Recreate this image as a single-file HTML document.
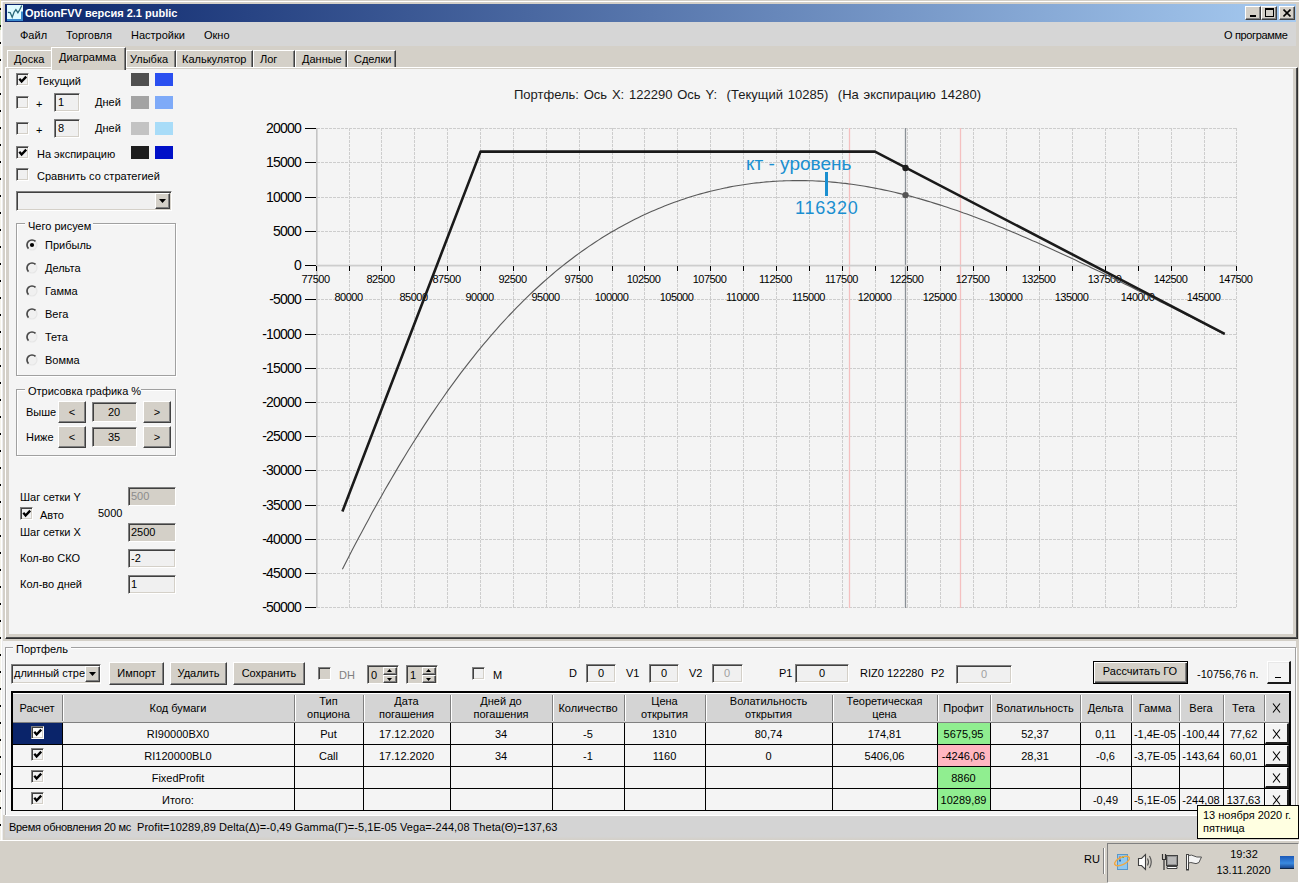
<!DOCTYPE html>
<html><head><meta charset="utf-8"><style>
html,body{margin:0;padding:0;width:1299px;height:883px;overflow:hidden;background:#d4d0c8}
body>div,body>svg{position:absolute;box-sizing:content-box}
.t{position:absolute;white-space:pre;font-family:'Liberation Sans', sans-serif}
</style></head><body>
<div style="left:0px;top:0px;width:1299px;height:883px;background:#d4d0c8"></div><div style="left:0px;top:0px;width:1px;height:840px;background:#f4f2ea"></div><div style="left:0px;top:0px;width:1px;height:12px;background:#e8e0b8"></div><div style="left:0px;top:12px;width:1px;height:18px;background:#a8c890"></div><div style="left:0px;top:8px;width:1px;height:2px;background:#000"></div><div style="left:0px;top:25px;width:1px;height:2px;background:#000"></div><div style="left:0px;top:42px;width:1px;height:2px;background:#000"></div><div style="left:0px;top:59px;width:1px;height:2px;background:#000"></div><div style="left:0px;top:76px;width:1px;height:2px;background:#000"></div><div style="left:0px;top:93px;width:1px;height:2px;background:#000"></div><div style="left:0px;top:110px;width:1px;height:2px;background:#000"></div><div style="left:0px;top:127px;width:1px;height:2px;background:#000"></div><div style="left:0px;top:144px;width:1px;height:2px;background:#000"></div><div style="left:0px;top:161px;width:1px;height:2px;background:#000"></div><div style="left:0px;top:178px;width:1px;height:2px;background:#000"></div><div style="left:0px;top:195px;width:1px;height:2px;background:#000"></div><div style="left:0px;top:212px;width:1px;height:2px;background:#000"></div><div style="left:0px;top:229px;width:1px;height:2px;background:#000"></div><div style="left:0px;top:246px;width:1px;height:2px;background:#000"></div><div style="left:0px;top:263px;width:1px;height:2px;background:#000"></div><div style="left:0px;top:280px;width:1px;height:2px;background:#000"></div><div style="left:0px;top:297px;width:1px;height:2px;background:#000"></div><div style="left:0px;top:314px;width:1px;height:2px;background:#000"></div><div style="left:0px;top:331px;width:1px;height:2px;background:#000"></div><div style="left:0px;top:348px;width:1px;height:2px;background:#000"></div><div style="left:0px;top:365px;width:1px;height:2px;background:#000"></div><div style="left:0px;top:382px;width:1px;height:2px;background:#000"></div><div style="left:0px;top:399px;width:1px;height:2px;background:#000"></div><div style="left:0px;top:416px;width:1px;height:2px;background:#000"></div><div style="left:0px;top:433px;width:1px;height:2px;background:#000"></div><div style="left:0px;top:450px;width:1px;height:2px;background:#000"></div><div style="left:0px;top:467px;width:1px;height:2px;background:#000"></div><div style="left:0px;top:484px;width:1px;height:2px;background:#000"></div><div style="left:0px;top:501px;width:1px;height:2px;background:#000"></div><div style="left:0px;top:518px;width:1px;height:2px;background:#000"></div><div style="left:0px;top:535px;width:1px;height:2px;background:#000"></div><div style="left:0px;top:552px;width:1px;height:2px;background:#000"></div><div style="left:0px;top:569px;width:1px;height:2px;background:#000"></div><div style="left:0px;top:586px;width:1px;height:2px;background:#000"></div><div style="left:0px;top:603px;width:1px;height:2px;background:#000"></div><div style="left:0px;top:620px;width:1px;height:2px;background:#000"></div><div style="left:0px;top:637px;width:1px;height:2px;background:#000"></div><div style="left:0px;top:654px;width:1px;height:2px;background:#000"></div><div style="left:0px;top:671px;width:1px;height:2px;background:#000"></div><div style="left:0px;top:688px;width:1px;height:2px;background:#000"></div><div style="left:0px;top:705px;width:1px;height:2px;background:#000"></div><div style="left:0px;top:722px;width:1px;height:2px;background:#000"></div><div style="left:0px;top:739px;width:1px;height:2px;background:#000"></div><div style="left:0px;top:756px;width:1px;height:2px;background:#000"></div><div style="left:0px;top:773px;width:1px;height:2px;background:#000"></div><div style="left:0px;top:790px;width:1px;height:2px;background:#000"></div><div style="left:0px;top:807px;width:1px;height:2px;background:#000"></div><div style="left:0px;top:824px;width:1px;height:2px;background:#000"></div><div style="left:1px;top:1px;width:1298px;height:1px;background:#fff"></div><div style="left:1px;top:1px;width:1px;height:839px;background:#fff"></div><div style="left:2px;top:2px;width:1px;height:838px;background:#ececec"></div><div style="left:5px;top:4px;width:1291px;height:18px;background:linear-gradient(to right,#0a246a,#a6caf0)"></div><div class="t" style="left:25px;top:8px;font-size:11px;line-height:11px;color:#fff;font-weight:700;">OptionFVV версия 2.1 public</div><svg style="left:7px;top:5px;position:absolute" width="16" height="16" viewBox="0 0 16 16"><rect x="0" y="0" width="16" height="16" fill="#3a88cc"/><rect x="0" y="0" width="16" height="6.5" fill="#e8fcff"/><rect x="0" y="0" width="14" height="14" fill="#e0fbff"/><path d="M0.9 7.3 L3.2 7.5 L5.2 12.3 L7.1 7.1 L8.9 4.6 L10.9 7.7 L12.7 4.8 L14.8 0.5" stroke="#2a6878" stroke-width="1.3" fill="none"/></svg><div style="left:1245px;top:6px;width:14px;height:12px;background:#d4d0c8;border-style:solid;border-width:1px;border-color:#fff #404040 #404040 #fff;box-shadow:inset -1px -1px 0 #808080, inset 1px 1px 0 #d4d0c8"></div><div style="left:1261px;top:6px;width:14px;height:12px;background:#d4d0c8;border-style:solid;border-width:1px;border-color:#fff #404040 #404040 #fff;box-shadow:inset -1px -1px 0 #808080, inset 1px 1px 0 #d4d0c8"></div><div style="left:1279px;top:6px;width:14px;height:12px;background:#d4d0c8;border-style:solid;border-width:1px;border-color:#fff #404040 #404040 #fff;box-shadow:inset -1px -1px 0 #808080, inset 1px 1px 0 #d4d0c8"></div><div style="left:1250px;top:15px;width:6px;height:2px;background:#000"></div><div style="left:1265px;top:8px;width:7px;height:6px;border:1px solid #000;border-top-width:2px"></div><svg style="position:absolute;left:1283px;top:9px" width="8" height="8" viewBox="0 0 8 8"><path d="M0.5 0.5 L7.5 7.5 M7.5 0.5 L0.5 7.5" stroke="#000" stroke-width="1.6"/></svg><div style="left:3px;top:22px;width:1293px;height:24px;background:#d6d6d6"></div><div class="t" style="left:20px;top:30px;font-size:11px;line-height:11px;color:#000;font-weight:400;">Файл</div><div class="t" style="left:66px;top:30px;font-size:11px;line-height:11px;color:#000;font-weight:400;">Торговля</div><div class="t" style="left:131px;top:30px;font-size:11px;line-height:11px;color:#000;font-weight:400;">Настройки</div><div class="t" style="left:204px;top:30px;font-size:11px;line-height:11px;color:#000;font-weight:400;">Окно</div><div class="t" style="left:1224px;top:30px;font-size:11px;line-height:11px;color:#000;font-weight:400;letter-spacing:-0.35px">О программе</div><div style="left:7px;top:50px;width:44px;height:17px;background:#d4d0c8;border-left:1px solid #fff;border-top:1px solid #fff"></div><div class="t" style="left:14px;top:54px;font-size:11px;line-height:11px;color:#000;font-weight:400;">Доска</div><div style="left:126px;top:50px;width:48px;height:17px;background:#d4d0c8;border-left:1px solid #fff;border-top:1px solid #fff;border-right:1px solid #404040;box-shadow:inset -1px 0 0 #808080"></div><div class="t" style="left:130px;top:54px;font-size:11px;line-height:11px;color:#000;font-weight:400;">Улыбка</div><div style="left:176px;top:50px;width:75px;height:17px;background:#d4d0c8;border-left:1px solid #fff;border-top:1px solid #fff;border-right:1px solid #404040;box-shadow:inset -1px 0 0 #808080"></div><div class="t" style="left:182px;top:54px;font-size:11px;line-height:11px;color:#000;font-weight:400;">Калькулятор</div><div style="left:253px;top:50px;width:40px;height:17px;background:#d4d0c8;border-left:1px solid #fff;border-top:1px solid #fff;border-right:1px solid #404040;box-shadow:inset -1px 0 0 #808080"></div><div class="t" style="left:260px;top:54px;font-size:11px;line-height:11px;color:#000;font-weight:400;">Лог</div><div style="left:295px;top:50px;width:50px;height:17px;background:#d4d0c8;border-left:1px solid #fff;border-top:1px solid #fff;border-right:1px solid #404040;box-shadow:inset -1px 0 0 #808080"></div><div class="t" style="left:302px;top:54px;font-size:11px;line-height:11px;color:#000;font-weight:400;">Данные</div><div style="left:347px;top:50px;width:47px;height:17px;background:#d4d0c8;border-left:1px solid #fff;border-top:1px solid #fff;border-right:1px solid #404040;box-shadow:inset -1px 0 0 #808080"></div><div class="t" style="left:354px;top:54px;font-size:11px;line-height:11px;color:#000;font-weight:400;">Сделки</div><div style="left:5px;top:67px;width:1291px;height:570px;background:#d4d0c8;border-left:1px solid #fff;border-top:1px solid #fff;border-right:1px solid #303030;border-bottom:1px solid #303030;box-shadow:inset -1px -1px 0 #505050"></div><div style="left:9px;top:69px;width:1284px;height:565px;background:#f4f4f4"></div><div style="left:51px;top:47px;width:73px;height:22px;background:#d4d0c8;border-left:1px solid #fff;border-top:1px solid #fff;border-right:1px solid #404040;box-shadow:inset -1px 0 0 #808080"></div><div class="t" style="left:59px;top:52px;font-size:11px;line-height:11px;color:#000;font-weight:400;">Диаграмма</div><svg style="position:absolute;left:250px;top:70px" width="1030" height="560" viewBox="250 70 1030 560"><line x1="349.5" y1="128" x2="349.5" y2="608" stroke="#cdcdcd" stroke-dasharray="3,1"/><line x1="381.5" y1="128" x2="381.5" y2="608" stroke="#cdcdcd" stroke-dasharray="3,1"/><line x1="414.5" y1="128" x2="414.5" y2="608" stroke="#cdcdcd" stroke-dasharray="3,1"/><line x1="447.5" y1="128" x2="447.5" y2="608" stroke="#cdcdcd" stroke-dasharray="3,1"/><line x1="480.5" y1="128" x2="480.5" y2="608" stroke="#cdcdcd" stroke-dasharray="3,1"/><line x1="513.5" y1="128" x2="513.5" y2="608" stroke="#cdcdcd" stroke-dasharray="3,1"/><line x1="546.5" y1="128" x2="546.5" y2="608" stroke="#cdcdcd" stroke-dasharray="3,1"/><line x1="579.5" y1="128" x2="579.5" y2="608" stroke="#cdcdcd" stroke-dasharray="3,1"/><line x1="612.5" y1="128" x2="612.5" y2="608" stroke="#cdcdcd" stroke-dasharray="3,1"/><line x1="644.5" y1="128" x2="644.5" y2="608" stroke="#cdcdcd" stroke-dasharray="3,1"/><line x1="677.5" y1="128" x2="677.5" y2="608" stroke="#cdcdcd" stroke-dasharray="3,1"/><line x1="710.5" y1="128" x2="710.5" y2="608" stroke="#cdcdcd" stroke-dasharray="3,1"/><line x1="743.5" y1="128" x2="743.5" y2="608" stroke="#cdcdcd" stroke-dasharray="3,1"/><line x1="776.5" y1="128" x2="776.5" y2="608" stroke="#cdcdcd" stroke-dasharray="3,1"/><line x1="809.5" y1="128" x2="809.5" y2="608" stroke="#cdcdcd" stroke-dasharray="3,1"/><line x1="842.5" y1="128" x2="842.5" y2="608" stroke="#cdcdcd" stroke-dasharray="3,1"/><line x1="875.5" y1="128" x2="875.5" y2="608" stroke="#cdcdcd" stroke-dasharray="3,1"/><line x1="907.5" y1="128" x2="907.5" y2="608" stroke="#cdcdcd" stroke-dasharray="3,1"/><line x1="940.5" y1="128" x2="940.5" y2="608" stroke="#cdcdcd" stroke-dasharray="3,1"/><line x1="973.5" y1="128" x2="973.5" y2="608" stroke="#cdcdcd" stroke-dasharray="3,1"/><line x1="1006.5" y1="128" x2="1006.5" y2="608" stroke="#cdcdcd" stroke-dasharray="3,1"/><line x1="1039.5" y1="128" x2="1039.5" y2="608" stroke="#cdcdcd" stroke-dasharray="3,1"/><line x1="1072.5" y1="128" x2="1072.5" y2="608" stroke="#cdcdcd" stroke-dasharray="3,1"/><line x1="1105.5" y1="128" x2="1105.5" y2="608" stroke="#cdcdcd" stroke-dasharray="3,1"/><line x1="1138.5" y1="128" x2="1138.5" y2="608" stroke="#cdcdcd" stroke-dasharray="3,1"/><line x1="1171.5" y1="128" x2="1171.5" y2="608" stroke="#cdcdcd" stroke-dasharray="3,1"/><line x1="1204.5" y1="128" x2="1204.5" y2="608" stroke="#cdcdcd" stroke-dasharray="3,1"/><line x1="1236.5" y1="128" x2="1236.5" y2="608" stroke="#cdcdcd" stroke-dasharray="3,1"/><line x1="317" y1="128.5" x2="1237" y2="128.5" stroke="#cdcdcd" stroke-dasharray="3,1"/><line x1="317" y1="162.5" x2="1237" y2="162.5" stroke="#cdcdcd" stroke-dasharray="3,1"/><line x1="317" y1="197.5" x2="1237" y2="197.5" stroke="#cdcdcd" stroke-dasharray="3,1"/><line x1="317" y1="231.5" x2="1237" y2="231.5" stroke="#cdcdcd" stroke-dasharray="3,1"/><line x1="317" y1="299.5" x2="1237" y2="299.5" stroke="#cdcdcd" stroke-dasharray="3,1"/><line x1="317" y1="334.5" x2="1237" y2="334.5" stroke="#cdcdcd" stroke-dasharray="3,1"/><line x1="317" y1="368.5" x2="1237" y2="368.5" stroke="#cdcdcd" stroke-dasharray="3,1"/><line x1="317" y1="402.5" x2="1237" y2="402.5" stroke="#cdcdcd" stroke-dasharray="3,1"/><line x1="317" y1="436.5" x2="1237" y2="436.5" stroke="#cdcdcd" stroke-dasharray="3,1"/><line x1="317" y1="470.5" x2="1237" y2="470.5" stroke="#cdcdcd" stroke-dasharray="3,1"/><line x1="317" y1="505.5" x2="1237" y2="505.5" stroke="#cdcdcd" stroke-dasharray="3,1"/><line x1="317" y1="539.5" x2="1237" y2="539.5" stroke="#cdcdcd" stroke-dasharray="3,1"/><line x1="317" y1="573.5" x2="1237" y2="573.5" stroke="#cdcdcd" stroke-dasharray="3,1"/><line x1="317" y1="607.5" x2="1237" y2="607.5" stroke="#cdcdcd" stroke-dasharray="3,1"/><line x1="849.5" y1="128" x2="849.5" y2="608" stroke="#f4c0c0" stroke-width="1.3"/><line x1="960.5" y1="128" x2="960.5" y2="608" stroke="#f4c0c0" stroke-width="1.3"/><line x1="905.5" y1="128" x2="905.5" y2="608" stroke="#8a9096" stroke-width="1.3"/><rect x="316" y="128" width="1.6" height="480" fill="#c4c4c4"/><rect x="316" y="264.7" width="921" height="1.8" fill="#cdcdcd"/><line x1="305" y1="128.5" x2="316" y2="128.5" stroke="#000" stroke-width="1"/><text font-family="Liberation Sans" xml:space="preserve" x="301" y="132.5" text-anchor="end" font-size="14" letter-spacing="-0.8" fill="#000">20000</text><line x1="305" y1="162.5" x2="316" y2="162.5" stroke="#000" stroke-width="1"/><text font-family="Liberation Sans" xml:space="preserve" x="301" y="166.5" text-anchor="end" font-size="14" letter-spacing="-0.8" fill="#000">15000</text><line x1="305" y1="197.5" x2="316" y2="197.5" stroke="#000" stroke-width="1"/><text font-family="Liberation Sans" xml:space="preserve" x="301" y="201.5" text-anchor="end" font-size="14" letter-spacing="-0.8" fill="#000">10000</text><line x1="305" y1="231.5" x2="316" y2="231.5" stroke="#000" stroke-width="1"/><text font-family="Liberation Sans" xml:space="preserve" x="301" y="235.5" text-anchor="end" font-size="14" letter-spacing="-0.8" fill="#000">5000</text><line x1="305" y1="265.5" x2="316" y2="265.5" stroke="#000" stroke-width="1"/><text font-family="Liberation Sans" xml:space="preserve" x="301" y="269.5" text-anchor="end" font-size="14" letter-spacing="-0.8" fill="#000">0</text><line x1="305" y1="299.5" x2="316" y2="299.5" stroke="#000" stroke-width="1"/><text font-family="Liberation Sans" xml:space="preserve" x="301" y="303.5" text-anchor="end" font-size="14" letter-spacing="-0.8" fill="#000">-5000</text><line x1="305" y1="334.5" x2="316" y2="334.5" stroke="#000" stroke-width="1"/><text font-family="Liberation Sans" xml:space="preserve" x="301" y="338.5" text-anchor="end" font-size="14" letter-spacing="-0.8" fill="#000">-10000</text><line x1="305" y1="368.5" x2="316" y2="368.5" stroke="#000" stroke-width="1"/><text font-family="Liberation Sans" xml:space="preserve" x="301" y="372.5" text-anchor="end" font-size="14" letter-spacing="-0.8" fill="#000">-15000</text><line x1="305" y1="402.5" x2="316" y2="402.5" stroke="#000" stroke-width="1"/><text font-family="Liberation Sans" xml:space="preserve" x="301" y="406.5" text-anchor="end" font-size="14" letter-spacing="-0.8" fill="#000">-20000</text><line x1="305" y1="436.5" x2="316" y2="436.5" stroke="#000" stroke-width="1"/><text font-family="Liberation Sans" xml:space="preserve" x="301" y="440.5" text-anchor="end" font-size="14" letter-spacing="-0.8" fill="#000">-25000</text><line x1="305" y1="470.5" x2="316" y2="470.5" stroke="#000" stroke-width="1"/><text font-family="Liberation Sans" xml:space="preserve" x="301" y="474.5" text-anchor="end" font-size="14" letter-spacing="-0.8" fill="#000">-30000</text><line x1="305" y1="505.5" x2="316" y2="505.5" stroke="#000" stroke-width="1"/><text font-family="Liberation Sans" xml:space="preserve" x="301" y="509.5" text-anchor="end" font-size="14" letter-spacing="-0.8" fill="#000">-35000</text><line x1="305" y1="539.5" x2="316" y2="539.5" stroke="#000" stroke-width="1"/><text font-family="Liberation Sans" xml:space="preserve" x="301" y="543.5" text-anchor="end" font-size="14" letter-spacing="-0.8" fill="#000">-40000</text><line x1="305" y1="573.5" x2="316" y2="573.5" stroke="#000" stroke-width="1"/><text font-family="Liberation Sans" xml:space="preserve" x="301" y="577.5" text-anchor="end" font-size="14" letter-spacing="-0.8" fill="#000">-45000</text><line x1="305" y1="607.5" x2="316" y2="607.5" stroke="#000" stroke-width="1"/><text font-family="Liberation Sans" xml:space="preserve" x="301" y="611.5" text-anchor="end" font-size="14" letter-spacing="-0.8" fill="#000">-50000</text><line x1="316.5" y1="266" x2="316.5" y2="271" stroke="#000" stroke-width="1"/><text font-family="Liberation Sans" xml:space="preserve" x="315.5" y="283" text-anchor="middle" font-size="11" letter-spacing="-0.5" fill="#000">77500</text><line x1="349.5" y1="266" x2="349.5" y2="271" stroke="#000" stroke-width="1"/><text font-family="Liberation Sans" xml:space="preserve" x="348.5" y="301" text-anchor="middle" font-size="11" letter-spacing="-0.5" fill="#000">80000</text><line x1="381.5" y1="266" x2="381.5" y2="271" stroke="#000" stroke-width="1"/><text font-family="Liberation Sans" xml:space="preserve" x="380.5" y="283" text-anchor="middle" font-size="11" letter-spacing="-0.5" fill="#000">82500</text><line x1="414.5" y1="266" x2="414.5" y2="271" stroke="#000" stroke-width="1"/><text font-family="Liberation Sans" xml:space="preserve" x="413.5" y="301" text-anchor="middle" font-size="11" letter-spacing="-0.5" fill="#000">85000</text><line x1="447.5" y1="266" x2="447.5" y2="271" stroke="#000" stroke-width="1"/><text font-family="Liberation Sans" xml:space="preserve" x="446.5" y="283" text-anchor="middle" font-size="11" letter-spacing="-0.5" fill="#000">87500</text><line x1="480.5" y1="266" x2="480.5" y2="271" stroke="#000" stroke-width="1"/><text font-family="Liberation Sans" xml:space="preserve" x="479.5" y="301" text-anchor="middle" font-size="11" letter-spacing="-0.5" fill="#000">90000</text><line x1="513.5" y1="266" x2="513.5" y2="271" stroke="#000" stroke-width="1"/><text font-family="Liberation Sans" xml:space="preserve" x="512.5" y="283" text-anchor="middle" font-size="11" letter-spacing="-0.5" fill="#000">92500</text><line x1="546.5" y1="266" x2="546.5" y2="271" stroke="#000" stroke-width="1"/><text font-family="Liberation Sans" xml:space="preserve" x="545.5" y="301" text-anchor="middle" font-size="11" letter-spacing="-0.5" fill="#000">95000</text><line x1="579.5" y1="266" x2="579.5" y2="271" stroke="#000" stroke-width="1"/><text font-family="Liberation Sans" xml:space="preserve" x="578.5" y="283" text-anchor="middle" font-size="11" letter-spacing="-0.5" fill="#000">97500</text><line x1="612.5" y1="266" x2="612.5" y2="271" stroke="#000" stroke-width="1"/><text font-family="Liberation Sans" xml:space="preserve" x="611.5" y="301" text-anchor="middle" font-size="11" letter-spacing="-0.5" fill="#000">100000</text><line x1="644.5" y1="266" x2="644.5" y2="271" stroke="#000" stroke-width="1"/><text font-family="Liberation Sans" xml:space="preserve" x="643.5" y="283" text-anchor="middle" font-size="11" letter-spacing="-0.5" fill="#000">102500</text><line x1="677.5" y1="266" x2="677.5" y2="271" stroke="#000" stroke-width="1"/><text font-family="Liberation Sans" xml:space="preserve" x="676.5" y="301" text-anchor="middle" font-size="11" letter-spacing="-0.5" fill="#000">105000</text><line x1="710.5" y1="266" x2="710.5" y2="271" stroke="#000" stroke-width="1"/><text font-family="Liberation Sans" xml:space="preserve" x="709.5" y="283" text-anchor="middle" font-size="11" letter-spacing="-0.5" fill="#000">107500</text><line x1="743.5" y1="266" x2="743.5" y2="271" stroke="#000" stroke-width="1"/><text font-family="Liberation Sans" xml:space="preserve" x="742.5" y="301" text-anchor="middle" font-size="11" letter-spacing="-0.5" fill="#000">110000</text><line x1="776.5" y1="266" x2="776.5" y2="271" stroke="#000" stroke-width="1"/><text font-family="Liberation Sans" xml:space="preserve" x="775.5" y="283" text-anchor="middle" font-size="11" letter-spacing="-0.5" fill="#000">112500</text><line x1="809.5" y1="266" x2="809.5" y2="271" stroke="#000" stroke-width="1"/><text font-family="Liberation Sans" xml:space="preserve" x="808.5" y="301" text-anchor="middle" font-size="11" letter-spacing="-0.5" fill="#000">115000</text><line x1="842.5" y1="266" x2="842.5" y2="271" stroke="#000" stroke-width="1"/><text font-family="Liberation Sans" xml:space="preserve" x="841.5" y="283" text-anchor="middle" font-size="11" letter-spacing="-0.5" fill="#000">117500</text><line x1="875.5" y1="266" x2="875.5" y2="271" stroke="#000" stroke-width="1"/><text font-family="Liberation Sans" xml:space="preserve" x="874.5" y="301" text-anchor="middle" font-size="11" letter-spacing="-0.5" fill="#000">120000</text><line x1="907.5" y1="266" x2="907.5" y2="271" stroke="#000" stroke-width="1"/><text font-family="Liberation Sans" xml:space="preserve" x="906.5" y="283" text-anchor="middle" font-size="11" letter-spacing="-0.5" fill="#000">122500</text><line x1="940.5" y1="266" x2="940.5" y2="271" stroke="#000" stroke-width="1"/><text font-family="Liberation Sans" xml:space="preserve" x="939.5" y="301" text-anchor="middle" font-size="11" letter-spacing="-0.5" fill="#000">125000</text><line x1="973.5" y1="266" x2="973.5" y2="271" stroke="#000" stroke-width="1"/><text font-family="Liberation Sans" xml:space="preserve" x="972.5" y="283" text-anchor="middle" font-size="11" letter-spacing="-0.5" fill="#000">127500</text><line x1="1006.5" y1="266" x2="1006.5" y2="271" stroke="#000" stroke-width="1"/><text font-family="Liberation Sans" xml:space="preserve" x="1005.5" y="301" text-anchor="middle" font-size="11" letter-spacing="-0.5" fill="#000">130000</text><line x1="1039.5" y1="266" x2="1039.5" y2="271" stroke="#000" stroke-width="1"/><text font-family="Liberation Sans" xml:space="preserve" x="1038.5" y="283" text-anchor="middle" font-size="11" letter-spacing="-0.5" fill="#000">132500</text><line x1="1072.5" y1="266" x2="1072.5" y2="271" stroke="#000" stroke-width="1"/><text font-family="Liberation Sans" xml:space="preserve" x="1071.5" y="301" text-anchor="middle" font-size="11" letter-spacing="-0.5" fill="#000">135000</text><line x1="1105.5" y1="266" x2="1105.5" y2="271" stroke="#000" stroke-width="1"/><text font-family="Liberation Sans" xml:space="preserve" x="1104.5" y="283" text-anchor="middle" font-size="11" letter-spacing="-0.5" fill="#000">137500</text><line x1="1138.5" y1="266" x2="1138.5" y2="271" stroke="#000" stroke-width="1"/><text font-family="Liberation Sans" xml:space="preserve" x="1137.5" y="301" text-anchor="middle" font-size="11" letter-spacing="-0.5" fill="#000">140000</text><line x1="1171.5" y1="266" x2="1171.5" y2="271" stroke="#000" stroke-width="1"/><text font-family="Liberation Sans" xml:space="preserve" x="1170.5" y="283" text-anchor="middle" font-size="11" letter-spacing="-0.5" fill="#000">142500</text><line x1="1204.5" y1="266" x2="1204.5" y2="271" stroke="#000" stroke-width="1"/><text font-family="Liberation Sans" xml:space="preserve" x="1203.5" y="301" text-anchor="middle" font-size="11" letter-spacing="-0.5" fill="#000">145000</text><line x1="1236.5" y1="266" x2="1236.5" y2="271" stroke="#000" stroke-width="1"/><text font-family="Liberation Sans" xml:space="preserve" x="1235.5" y="283" text-anchor="middle" font-size="11" letter-spacing="-0.5" fill="#000">147500</text><path d="M342.4,569.3 L345.7,562.8 L348.9,556.4 L352.2,550.1 L355.5,543.8 L358.8,537.5 L362.1,531.4 L365.4,525.2 L368.7,519.2 L371.9,513.1 L375.2,507.2 L378.5,501.3 L381.8,495.4 L385.1,489.6 L388.4,483.9 L391.7,478.3 L395.0,472.6 L398.2,467.1 L401.5,461.6 L404.8,456.2 L408.1,450.8 L411.4,445.5 L414.7,440.3 L418.0,435.1 L421.3,429.9 L424.5,424.9 L427.8,419.9 L431.1,414.9 L434.4,410.1 L437.7,405.2 L441.0,400.5 L444.3,395.8 L447.5,391.1 L450.8,386.6 L454.1,382.1 L457.4,377.6 L460.7,373.2 L464.0,368.9 L467.3,364.6 L470.6,360.4 L473.8,356.3 L477.1,352.2 L480.4,348.1 L483.7,344.2 L487.0,340.3 L490.3,336.4 L493.6,332.6 L496.9,328.9 L500.1,325.2 L503.4,321.6 L506.7,318.0 L510.0,314.5 L513.3,311.1 L516.6,307.7 L519.9,304.3 L523.1,301.1 L526.4,297.8 L529.7,294.7 L533.0,291.5 L536.3,288.5 L539.6,285.5 L542.9,282.5 L546.2,279.6 L549.4,276.8 L552.7,274.0 L556.0,271.2 L559.3,268.5 L562.6,265.9 L565.9,263.3 L569.2,260.7 L572.5,258.2 L575.7,255.8 L579.0,253.4 L582.3,251.0 L585.6,248.7 L588.9,246.4 L592.2,244.2 L595.5,242.0 L598.8,239.9 L602.0,237.8 L605.3,235.8 L608.6,233.8 L611.9,231.8 L615.2,229.9 L618.5,228.0 L621.8,226.2 L625.0,224.4 L628.3,222.7 L631.6,221.0 L634.9,219.3 L638.2,217.7 L641.5,216.1 L644.8,214.6 L648.1,213.1 L651.3,211.6 L654.6,210.2 L657.9,208.8 L661.2,207.4 L664.5,206.1 L667.8,204.8 L671.1,203.5 L674.4,202.3 L677.6,201.2 L680.9,200.0 L684.2,198.9 L687.5,197.8 L690.8,196.8 L694.1,195.8 L697.4,194.8 L700.6,193.9 L703.9,193.0 L707.2,192.1 L710.5,191.3 L713.8,190.5 L717.1,189.7 L720.4,189.0 L723.7,188.2 L726.9,187.6 L730.2,186.9 L733.5,186.3 L736.8,185.7 L740.1,185.2 L743.4,184.7 L746.7,184.2 L750.0,183.7 L753.2,183.3 L756.5,182.9 L759.8,182.6 L763.1,182.2 L766.4,181.9 L769.7,181.7 L773.0,181.4 L776.2,181.2 L779.5,181.0 L782.8,180.9 L786.1,180.7 L789.4,180.7 L792.7,180.6 L796.0,180.6 L799.3,180.5 L802.5,180.6 L805.8,180.6 L809.1,180.7 L812.4,180.8 L815.7,181.0 L819.0,181.1 L822.3,181.3 L825.6,181.5 L828.8,181.8 L832.1,182.1 L835.4,182.4 L838.7,182.7 L842.0,183.1 L845.3,183.4 L848.6,183.9 L851.8,184.3 L855.1,184.8 L858.4,185.3 L861.7,185.8 L865.0,186.3 L868.3,186.9 L871.6,187.5 L874.9,188.1 L878.1,188.7 L881.4,189.4 L884.7,190.1 L888.0,190.8 L891.3,191.5 L894.6,192.3 L897.9,193.1 L901.2,193.9 L904.4,194.7 L907.7,195.5 L911.0,196.4 L914.3,197.3 L917.6,198.2 L920.9,199.1 L924.2,200.1 L927.5,201.1 L930.7,202.1 L934.0,203.1 L937.3,204.1 L940.6,205.1 L943.9,206.2 L947.2,207.3 L950.5,208.4 L953.7,209.5 L957.0,210.6 L960.3,211.8 L963.6,213.0 L966.9,214.1 L970.2,215.3 L973.5,216.6 L976.8,217.8 L980.0,219.0 L983.3,220.3 L986.6,221.6 L989.9,222.8 L993.2,224.1 L996.5,225.5 L999.8,226.8 L1003.1,228.1 L1006.3,229.5 L1009.6,230.8 L1012.9,232.2 L1016.2,233.6 L1019.5,235.0 L1022.8,236.4 L1026.1,237.8 L1029.3,239.2 L1032.6,240.7 L1035.9,242.1 L1039.2,243.6 L1042.5,245.0 L1045.8,246.5 L1049.1,248.0 L1052.4,249.5 L1055.6,251.0 L1058.9,252.5 L1062.2,254.0 L1065.5,255.5 L1068.8,257.0 L1072.1,258.6 L1075.4,260.1 L1078.7,261.7 L1081.9,263.2 L1085.2,264.8 L1088.5,266.3 L1091.8,267.9 L1095.1,269.5 L1098.4,271.1 L1101.7,272.6 L1104.9,274.2 L1108.2,275.8 L1111.5,277.4 L1114.8,279.0 L1118.1,280.6 L1121.4,282.3 L1124.7,283.9 L1128.0,285.5 L1131.2,287.1 L1134.5,288.7 L1137.8,290.4 L1141.1,292.0 L1144.4,293.6 L1147.7,295.3 L1151.0,296.9 L1154.3,298.6 L1157.5,300.2 L1160.8,301.9 L1164.1,303.5 L1167.4,305.2 L1170.7,306.8 L1174.0,308.5 L1177.3,310.2 L1180.5,311.8 L1183.8,313.5 L1187.1,315.2 L1190.4,316.8 L1193.7,318.5 L1197.0,320.2 L1200.3,321.9 L1203.6,323.5 L1206.8,325.2 L1210.1,326.9 L1213.4,328.6 L1216.7,330.3 L1220.0,332.0 L1223.3,333.6 L1224.7,334.4" stroke="#5a5a5a" stroke-width="1.1" fill="none"/><path d="M342.4,511.5 L480.5,151.6 L875.0,151.6 L1224.7,333.8" stroke="#1a1a1a" stroke-width="2.6" fill="none" stroke-linejoin="round"/><circle cx="905.5" cy="168" r="3.2" fill="#1e1e1e"/><circle cx="905.5" cy="195.1" r="3.2" fill="#555"/><text font-family="Liberation Sans" xml:space="preserve" x="746" y="169.5" font-size="19" fill="#1a8fd0">кт - уровень</text><rect x="825" y="172" width="3" height="24" fill="#1a8fd0"/><text font-family="Liberation Sans" xml:space="preserve" x="795" y="213.6" font-size="18" letter-spacing="0.8" fill="#1a8fd0">116320</text><text font-family="Liberation Sans" xml:space="preserve" x="514" y="99" font-size="13" word-spacing="1.2" fill="#1a1a1a">Портфель: Ось X: 122290 Ось Y:  (Текущий 10285)  (На экспирацию 14280)</text></svg><div style="left:16px;top:73px;width:11px;height:11px;background:#f0f0f0;border-style:solid;border-width:1px;border-color:#808080 #fff #fff #808080;box-shadow:inset 1px 1px 0 #404040, inset -1px -1px 0 #d4d0c8"><svg width="13" height="13" viewBox="0 0 13 13" style="position:absolute;left:-1px;top:-1px"><path d="M3.3 5.8 L5.6 8.6 L10.2 3.6" stroke="#000" stroke-width="2.3" fill="none"/></svg></div><div class="t" style="left:37px;top:76px;font-size:11px;line-height:11px;color:#000;font-weight:400;">Текущий</div><div style="left:131px;top:73px;width:18px;height:13px;background:#4f4f4f"></div><div style="left:155px;top:73px;width:18px;height:13px;background:#2a4ff0"></div><div style="left:16px;top:96px;width:11px;height:11px;background:#f0f0f0;border-style:solid;border-width:1px;border-color:#808080 #fff #fff #808080;box-shadow:inset 1px 1px 0 #404040, inset -1px -1px 0 #d4d0c8"></div><div class="t" style="left:36px;top:99px;font-size:11px;line-height:11px;color:#000;font-weight:400;">+</div><div style="left:54px;top:93px;width:24px;height:17px;background:#f0f0f0;border-style:solid;border-width:1px;border-color:#808080 #fff #fff #808080;box-shadow:inset 1px 1px 0 #404040, inset -1px -1px 0 #d4d0c8"></div><div class="t" style="left:58px;top:97px;font-size:11px;line-height:11px;color:#000;font-weight:400;">1</div><div class="t" style="left:95px;top:97px;font-size:11px;line-height:11px;color:#000;font-weight:400;">Дней</div><div style="left:131px;top:96px;width:18px;height:13px;background:#a3a3a3"></div><div style="left:155px;top:96px;width:18px;height:13px;background:#7eaaf8"></div><div style="left:16px;top:122px;width:11px;height:11px;background:#f0f0f0;border-style:solid;border-width:1px;border-color:#808080 #fff #fff #808080;box-shadow:inset 1px 1px 0 #404040, inset -1px -1px 0 #d4d0c8"></div><div class="t" style="left:36px;top:125px;font-size:11px;line-height:11px;color:#000;font-weight:400;">+</div><div style="left:54px;top:119px;width:24px;height:17px;background:#f0f0f0;border-style:solid;border-width:1px;border-color:#808080 #fff #fff #808080;box-shadow:inset 1px 1px 0 #404040, inset -1px -1px 0 #d4d0c8"></div><div class="t" style="left:58px;top:123px;font-size:11px;line-height:11px;color:#000;font-weight:400;">8</div><div class="t" style="left:95px;top:123px;font-size:11px;line-height:11px;color:#000;font-weight:400;">Дней</div><div style="left:131px;top:122px;width:18px;height:13px;background:#c3c3c3"></div><div style="left:155px;top:122px;width:18px;height:13px;background:#a8dcf8"></div><div style="left:16px;top:146px;width:11px;height:11px;background:#f0f0f0;border-style:solid;border-width:1px;border-color:#808080 #fff #fff #808080;box-shadow:inset 1px 1px 0 #404040, inset -1px -1px 0 #d4d0c8"><svg width="13" height="13" viewBox="0 0 13 13" style="position:absolute;left:-1px;top:-1px"><path d="M3.3 5.8 L5.6 8.6 L10.2 3.6" stroke="#000" stroke-width="2.3" fill="none"/></svg></div><div class="t" style="left:37px;top:149px;font-size:11px;line-height:11px;color:#000;font-weight:400;">На экспирацию</div><div style="left:131px;top:146px;width:18px;height:13px;background:#1e1e1e"></div><div style="left:155px;top:146px;width:18px;height:13px;background:#0010c8"></div><div style="left:16px;top:168px;width:11px;height:11px;background:#f0f0f0;border-style:solid;border-width:1px;border-color:#808080 #fff #fff #808080;box-shadow:inset 1px 1px 0 #404040, inset -1px -1px 0 #d4d0c8"></div><div class="t" style="left:37px;top:171px;font-size:11px;line-height:11px;color:#000;font-weight:400;">Сравнить со стратегией</div><div style="left:16px;top:191px;width:154px;height:18px;background:#f0f0f0;border-style:solid;border-width:1px;border-color:#808080 #fff #fff #808080;box-shadow:inset 1px 1px 0 #404040, inset -1px -1px 0 #d4d0c8"></div><div style="left:155px;top:193px;width:13px;height:14px;background:#d4d0c8;border-style:solid;border-width:1px;border-color:#fff #404040 #404040 #fff;box-shadow:inset -1px -1px 0 #808080, inset 1px 1px 0 #d4d0c8"></div><svg style="position:absolute;left:159px;top:199px" width="7" height="4" viewBox="0 0 7 4"><path d="M0 0 L7 0 L3.5 4 Z" fill="#000"/></svg><div style="left:16px;top:223px;width:158px;height:151px;border:1px solid #a0a0a0;box-shadow:1px 1px 0 #fff, inset 1px 1px 0 #fff"></div><div style="left:25px;top:219px;width:68px;height:9px;background:#f4f4f4"></div><div class="t" style="left:28px;top:221px;font-size:11px;line-height:11px;color:#000;font-weight:400;">Чего рисуем</div><div style="left:26px;top:239px;width:12px;height:12px"><svg width="12" height="12" viewBox="0 0 12 12" style="position:absolute;left:0;top:0"><circle cx="6" cy="6" r="5" fill="#f0f0f0" stroke="#e6e6e6" stroke-width="1.2"/><path d="M2.46 9.54 A5 5 0 0 1 9.54 2.46" stroke="#4a4a4a" stroke-width="1.7" fill="none"/><circle cx="6" cy="6" r="2.1" fill="#000"/></svg></div><div class="t" style="left:45px;top:240px;font-size:11px;line-height:11px;color:#000;font-weight:400;">Прибыль</div><div style="left:26px;top:262px;width:12px;height:12px"><svg width="12" height="12" viewBox="0 0 12 12" style="position:absolute;left:0;top:0"><circle cx="6" cy="6" r="5" fill="#f0f0f0" stroke="#e6e6e6" stroke-width="1.2"/><path d="M2.46 9.54 A5 5 0 0 1 9.54 2.46" stroke="#4a4a4a" stroke-width="1.7" fill="none"/></svg></div><div class="t" style="left:45px;top:263px;font-size:11px;line-height:11px;color:#000;font-weight:400;">Дельта</div><div style="left:26px;top:285px;width:12px;height:12px"><svg width="12" height="12" viewBox="0 0 12 12" style="position:absolute;left:0;top:0"><circle cx="6" cy="6" r="5" fill="#f0f0f0" stroke="#e6e6e6" stroke-width="1.2"/><path d="M2.46 9.54 A5 5 0 0 1 9.54 2.46" stroke="#4a4a4a" stroke-width="1.7" fill="none"/></svg></div><div class="t" style="left:45px;top:286px;font-size:11px;line-height:11px;color:#000;font-weight:400;">Гамма</div><div style="left:26px;top:308px;width:12px;height:12px"><svg width="12" height="12" viewBox="0 0 12 12" style="position:absolute;left:0;top:0"><circle cx="6" cy="6" r="5" fill="#f0f0f0" stroke="#e6e6e6" stroke-width="1.2"/><path d="M2.46 9.54 A5 5 0 0 1 9.54 2.46" stroke="#4a4a4a" stroke-width="1.7" fill="none"/></svg></div><div class="t" style="left:45px;top:309px;font-size:11px;line-height:11px;color:#000;font-weight:400;">Вега</div><div style="left:26px;top:331px;width:12px;height:12px"><svg width="12" height="12" viewBox="0 0 12 12" style="position:absolute;left:0;top:0"><circle cx="6" cy="6" r="5" fill="#f0f0f0" stroke="#e6e6e6" stroke-width="1.2"/><path d="M2.46 9.54 A5 5 0 0 1 9.54 2.46" stroke="#4a4a4a" stroke-width="1.7" fill="none"/></svg></div><div class="t" style="left:45px;top:332px;font-size:11px;line-height:11px;color:#000;font-weight:400;">Тета</div><div style="left:26px;top:354px;width:12px;height:12px"><svg width="12" height="12" viewBox="0 0 12 12" style="position:absolute;left:0;top:0"><circle cx="6" cy="6" r="5" fill="#f0f0f0" stroke="#e6e6e6" stroke-width="1.2"/><path d="M2.46 9.54 A5 5 0 0 1 9.54 2.46" stroke="#4a4a4a" stroke-width="1.7" fill="none"/></svg></div><div class="t" style="left:45px;top:355px;font-size:11px;line-height:11px;color:#000;font-weight:400;">Вомма</div><div style="left:16px;top:389px;width:158px;height:65px;border:1px solid #a0a0a0;box-shadow:1px 1px 0 #fff, inset 1px 1px 0 #fff"></div><div style="left:25px;top:385px;width:116px;height:9px;background:#f4f4f4"></div><div class="t" style="left:28px;top:386px;font-size:11px;line-height:11px;color:#000;font-weight:400;">Отрисовка графика %</div><div class="t" style="left:26px;top:407px;font-size:11px;line-height:11px;color:#000;font-weight:400;">Выше</div><div style="left:58px;top:401px;width:26px;height:20px;background:#d4d0c8;border-style:solid;border-width:1px;border-color:#fff #404040 #404040 #fff;box-shadow:inset -1px -1px 0 #808080, inset 1px 1px 0 #d4d0c8"></div><div class="t" style="left:62.0px;width:20px;text-align:center;top:407px;font-size:11px;line-height:11px;color:#000;font-weight:400;">&lt;</div><div style="left:92px;top:402px;width:43px;height:18px;background:#d4d0c8;border-style:solid;border-width:1px;border-color:#808080 #fff #fff #808080;box-shadow:inset 1px 1px 0 #404040, inset -1px -1px 0 #d4d0c8"></div><div class="t" style="left:94.0px;width:40px;text-align:center;top:407px;font-size:11px;line-height:11px;color:#000;font-weight:400;">20</div><div style="left:143px;top:401px;width:26px;height:20px;background:#d4d0c8;border-style:solid;border-width:1px;border-color:#fff #404040 #404040 #fff;box-shadow:inset -1px -1px 0 #808080, inset 1px 1px 0 #d4d0c8"></div><div class="t" style="left:147.0px;width:20px;text-align:center;top:407px;font-size:11px;line-height:11px;color:#000;font-weight:400;">&gt;</div><div class="t" style="left:26px;top:432px;font-size:11px;line-height:11px;color:#000;font-weight:400;">Ниже</div><div style="left:58px;top:426px;width:26px;height:20px;background:#d4d0c8;border-style:solid;border-width:1px;border-color:#fff #404040 #404040 #fff;box-shadow:inset -1px -1px 0 #808080, inset 1px 1px 0 #d4d0c8"></div><div class="t" style="left:62.0px;width:20px;text-align:center;top:432px;font-size:11px;line-height:11px;color:#000;font-weight:400;">&lt;</div><div style="left:92px;top:427px;width:43px;height:18px;background:#d4d0c8;border-style:solid;border-width:1px;border-color:#808080 #fff #fff #808080;box-shadow:inset 1px 1px 0 #404040, inset -1px -1px 0 #d4d0c8"></div><div class="t" style="left:94.0px;width:40px;text-align:center;top:432px;font-size:11px;line-height:11px;color:#000;font-weight:400;">35</div><div style="left:143px;top:426px;width:26px;height:20px;background:#d4d0c8;border-style:solid;border-width:1px;border-color:#fff #404040 #404040 #fff;box-shadow:inset -1px -1px 0 #808080, inset 1px 1px 0 #d4d0c8"></div><div class="t" style="left:147.0px;width:20px;text-align:center;top:432px;font-size:11px;line-height:11px;color:#000;font-weight:400;">&gt;</div><div class="t" style="left:20px;top:492px;font-size:11px;line-height:11px;color:#000;font-weight:400;">Шаг сетки Y</div><div style="left:128px;top:487px;width:46px;height:17px;background:#d4d0c8;border-style:solid;border-width:1px;border-color:#808080 #fff #fff #808080;box-shadow:inset 1px 1px 0 #404040, inset -1px -1px 0 #d4d0c8"></div><div class="t" style="left:131px;top:491px;font-size:11px;line-height:11px;color:#8c8c8c;font-weight:400;">500</div><div style="left:20px;top:507px;width:11px;height:11px;background:#f0f0f0;border-style:solid;border-width:1px;border-color:#808080 #fff #fff #808080;box-shadow:inset 1px 1px 0 #404040, inset -1px -1px 0 #d4d0c8"><svg width="13" height="13" viewBox="0 0 13 13" style="position:absolute;left:-1px;top:-1px"><path d="M3.3 5.8 L5.6 8.6 L10.2 3.6" stroke="#000" stroke-width="2.3" fill="none"/></svg></div><div class="t" style="left:40px;top:510px;font-size:11px;line-height:11px;color:#000;font-weight:400;">Авто</div><div class="t" style="left:98px;top:508px;font-size:11px;line-height:11px;color:#000;font-weight:400;">5000</div><div class="t" style="left:20px;top:527px;font-size:11px;line-height:11px;color:#000;font-weight:400;">Шаг сетки X</div><div style="left:128px;top:523px;width:46px;height:17px;background:#d4d0c8;border-style:solid;border-width:1px;border-color:#808080 #fff #fff #808080;box-shadow:inset 1px 1px 0 #404040, inset -1px -1px 0 #d4d0c8"></div><div class="t" style="left:131px;top:527px;font-size:11px;line-height:11px;color:#000;font-weight:400;">2500</div><div class="t" style="left:20px;top:553px;font-size:11px;line-height:11px;color:#000;font-weight:400;">Кол-во СКО</div><div style="left:128px;top:549px;width:46px;height:17px;background:#f0f0f0;border-style:solid;border-width:1px;border-color:#808080 #fff #fff #808080;box-shadow:inset 1px 1px 0 #404040, inset -1px -1px 0 #d4d0c8"></div><div class="t" style="left:131px;top:553px;font-size:11px;line-height:11px;color:#000;font-weight:400;">-2</div><div class="t" style="left:20px;top:579px;font-size:11px;line-height:11px;color:#000;font-weight:400;">Кол-во дней</div><div style="left:128px;top:575px;width:46px;height:17px;background:#f0f0f0;border-style:solid;border-width:1px;border-color:#808080 #fff #fff #808080;box-shadow:inset 1px 1px 0 #404040, inset -1px -1px 0 #d4d0c8"></div><div class="t" style="left:131px;top:579px;font-size:11px;line-height:11px;color:#000;font-weight:400;">1</div><div style="left:3px;top:641px;width:1293px;height:174px;background:#f4f4f4"></div><div style="left:5px;top:647px;width:1289px;height:167px;border:1px solid #a0a0a0;box-shadow:1px 1px 0 #fff, inset 1px 1px 0 #fff;background:#f4f4f4"></div><div style="left:13px;top:642px;width:58px;height:10px;background:#f4f4f4"></div><div class="t" style="left:16px;top:644px;font-size:11px;line-height:11px;color:#000;font-weight:400;">Портфель</div><div style="left:11px;top:664px;width:88px;height:18px;background:#f0f0f0;border-style:solid;border-width:1px;border-color:#808080 #fff #fff #808080;box-shadow:inset 1px 1px 0 #404040, inset -1px -1px 0 #d4d0c8"></div><div class="t" style="left:14px;top:668px;font-size:11px;line-height:11px;color:#000;font-weight:400;">длинный стре</div><div style="left:85px;top:666px;width:13px;height:14px;background:#d4d0c8;border-style:solid;border-width:1px;border-color:#fff #404040 #404040 #fff;box-shadow:inset -1px -1px 0 #808080, inset 1px 1px 0 #d4d0c8"></div><svg style="position:absolute;left:89px;top:672px" width="7" height="4" viewBox="0 0 7 4"><path d="M0 0 L7 0 L3.5 4 Z" fill="#000"/></svg><div style="left:109px;top:662px;width:53px;height:21px;background:#d4d0c8;border-style:solid;border-width:1px;border-color:#fff #404040 #404040 #fff;box-shadow:inset -1px -1px 0 #808080, inset 1px 1px 0 #d4d0c8"></div><div class="t" style="left:86.5px;width:100px;text-align:center;top:668px;font-size:11px;line-height:11px;color:#000;font-weight:400;">Импорт</div><div style="left:170px;top:662px;width:55px;height:21px;background:#d4d0c8;border-style:solid;border-width:1px;border-color:#fff #404040 #404040 #fff;box-shadow:inset -1px -1px 0 #808080, inset 1px 1px 0 #d4d0c8"></div><div class="t" style="left:148.5px;width:100px;text-align:center;top:668px;font-size:11px;line-height:11px;color:#000;font-weight:400;">Удалить</div><div style="left:233px;top:662px;width:70px;height:21px;background:#d4d0c8;border-style:solid;border-width:1px;border-color:#fff #404040 #404040 #fff;box-shadow:inset -1px -1px 0 #808080, inset 1px 1px 0 #d4d0c8"></div><div class="t" style="left:219.0px;width:100px;text-align:center;top:668px;font-size:11px;line-height:11px;color:#000;font-weight:400;">Сохранить</div><div style="left:318px;top:667px;width:11px;height:11px;background:#d4d0c8;border-style:solid;border-width:1px;border-color:#808080 #fff #fff #808080;box-shadow:inset 1px 1px 0 #404040, inset -1px -1px 0 #d4d0c8"></div><div class="t" style="left:339px;top:670px;font-size:11px;line-height:11px;color:#808080;font-weight:400;">DH</div><div style="left:367px;top:665px;width:30px;height:17px;background:#d4d0c8;border-style:solid;border-width:1px;border-color:#808080 #fff #fff #808080;box-shadow:inset 1px 1px 0 #404040, inset -1px -1px 0 #d4d0c8"></div><div class="t" style="left:371px;top:670px;font-size:11px;line-height:11px;color:#000;font-weight:400;">0</div><div style="left:383px;top:667px;width:12px;height:6px;background:#d4d0c8;border-style:solid;border-width:1px;border-color:#fff #404040 #404040 #fff;box-shadow:inset -1px -1px 0 #808080, inset 1px 1px 0 #d4d0c8"></div><div style="left:383px;top:675px;width:12px;height:6px;background:#d4d0c8;border-style:solid;border-width:1px;border-color:#fff #404040 #404040 #fff;box-shadow:inset -1px -1px 0 #808080, inset 1px 1px 0 #d4d0c8"></div><svg style="position:absolute;left:387px;top:669px" width="5" height="3" viewBox="0 0 5 3"><path d="M0 3 L5 3 L2.5 0Z" fill="#000"/></svg><svg style="position:absolute;left:387px;top:678px" width="5" height="3" viewBox="0 0 5 3"><path d="M0 0 L5 0 L2.5 3Z" fill="#000"/></svg><div style="left:406px;top:665px;width:30px;height:17px;background:#d4d0c8;border-style:solid;border-width:1px;border-color:#808080 #fff #fff #808080;box-shadow:inset 1px 1px 0 #404040, inset -1px -1px 0 #d4d0c8"></div><div class="t" style="left:410px;top:670px;font-size:11px;line-height:11px;color:#000;font-weight:400;">1</div><div style="left:422px;top:667px;width:12px;height:6px;background:#d4d0c8;border-style:solid;border-width:1px;border-color:#fff #404040 #404040 #fff;box-shadow:inset -1px -1px 0 #808080, inset 1px 1px 0 #d4d0c8"></div><div style="left:422px;top:675px;width:12px;height:6px;background:#d4d0c8;border-style:solid;border-width:1px;border-color:#fff #404040 #404040 #fff;box-shadow:inset -1px -1px 0 #808080, inset 1px 1px 0 #d4d0c8"></div><svg style="position:absolute;left:426px;top:669px" width="5" height="3" viewBox="0 0 5 3"><path d="M0 3 L5 3 L2.5 0Z" fill="#000"/></svg><svg style="position:absolute;left:426px;top:678px" width="5" height="3" viewBox="0 0 5 3"><path d="M0 0 L5 0 L2.5 3Z" fill="#000"/></svg><div style="left:472px;top:667px;width:11px;height:11px;background:#f0f0f0;border-style:solid;border-width:1px;border-color:#808080 #fff #fff #808080;box-shadow:inset 1px 1px 0 #404040, inset -1px -1px 0 #d4d0c8"></div><div class="t" style="left:493px;top:670px;font-size:11px;line-height:11px;color:#000;font-weight:400;">M</div><div class="t" style="left:569px;top:668px;font-size:11px;line-height:11px;color:#000;font-weight:400;">D</div><div style="left:586px;top:664px;width:28px;height:17px;background:#f0f0f0;border-style:solid;border-width:1px;border-color:#808080 #fff #fff #808080;box-shadow:inset 1px 1px 0 #404040, inset -1px -1px 0 #d4d0c8"></div><div class="t" style="left:586.0px;width:30px;text-align:center;top:668px;font-size:11px;line-height:11px;color:#000;font-weight:400;">0</div><div class="t" style="left:626px;top:668px;font-size:11px;line-height:11px;color:#000;font-weight:400;">V1</div><div style="left:649px;top:664px;width:28px;height:17px;background:#f0f0f0;border-style:solid;border-width:1px;border-color:#808080 #fff #fff #808080;box-shadow:inset 1px 1px 0 #404040, inset -1px -1px 0 #d4d0c8"></div><div class="t" style="left:649.0px;width:30px;text-align:center;top:668px;font-size:11px;line-height:11px;color:#000;font-weight:400;">0</div><div class="t" style="left:689px;top:668px;font-size:11px;line-height:11px;color:#000;font-weight:400;">V2</div><div style="left:712px;top:664px;width:29px;height:17px;background:#f0f0f0;border-style:solid;border-width:1px;border-color:#808080 #fff #fff #808080;box-shadow:inset 1px 1px 0 #404040, inset -1px -1px 0 #d4d0c8"></div><div class="t" style="left:712.0px;width:30px;text-align:center;top:668px;font-size:11px;line-height:11px;color:#a0a0a0;font-weight:400;">0</div><div class="t" style="left:779px;top:668px;font-size:11px;line-height:11px;color:#000;font-weight:400;">P1</div><div style="left:795px;top:664px;width:52px;height:17px;background:#f0f0f0;border-style:solid;border-width:1px;border-color:#808080 #fff #fff #808080;box-shadow:inset 1px 1px 0 #404040, inset -1px -1px 0 #d4d0c8"></div><div class="t" style="left:807.0px;width:30px;text-align:center;top:668px;font-size:11px;line-height:11px;color:#000;font-weight:400;">0</div><div class="t" style="left:860px;top:668px;font-size:11px;line-height:11px;color:#000;font-weight:400;">RIZ0 122280</div><div class="t" style="left:931px;top:668px;font-size:11px;line-height:11px;color:#000;font-weight:400;">P2</div><div style="left:956px;top:665px;width:54px;height:17px;background:#f0f0f0;border-style:solid;border-width:1px;border-color:#808080 #fff #fff #808080;box-shadow:inset 1px 1px 0 #404040, inset -1px -1px 0 #d4d0c8"></div><div class="t" style="left:969.0px;width:30px;text-align:center;top:669px;font-size:11px;line-height:11px;color:#a0a0a0;font-weight:400;">0</div><div style="left:1093px;top:661px;width:93px;height:21px;border:1px solid #000;background:#d4d0c8;box-shadow:inset 1px 1px 0 #fff, inset -1px -1px 0 #404040, inset -2px -2px 0 #808080"></div><div class="t" style="left:1080.0px;width:120px;text-align:center;top:666px;font-size:11px;line-height:11px;color:#000;font-weight:400;">Рассчитать ГО</div><div class="t" style="left:1197px;top:669px;font-size:11px;line-height:11px;color:#000;font-weight:400;">-10756,76 п.</div><div style="left:1267px;top:661px;width:21px;height:20px;background:#f4f4f4;border-left:1px solid #fff;border-top:1px solid #fff;border-right:2px solid #1a1a1a;border-bottom:2px solid #1a1a1a;box-shadow:inset 1px 1px 0 #e8e8e8"></div><div style="left:1275px;top:677px;width:6px;height:1px;background:#000"></div><div style="left:11px;top:691px;width:1276px;height:117px;border:2px solid #000;border-bottom-width:1px;background:#f4f4f4"></div><div style="left:13px;top:693px;width:1276px;height:1px;background:#fff"></div><div style="left:13px;top:694px;width:1276px;height:28px;background:#d4d4d4"></div><div style="left:62px;top:695px;width:1px;height:26px;background:#808080"></div><div style="left:63px;top:695px;width:1px;height:26px;background:#fff"></div><div style="left:294px;top:695px;width:1px;height:26px;background:#808080"></div><div style="left:295px;top:695px;width:1px;height:26px;background:#fff"></div><div style="left:363px;top:695px;width:1px;height:26px;background:#808080"></div><div style="left:364px;top:695px;width:1px;height:26px;background:#fff"></div><div style="left:450px;top:695px;width:1px;height:26px;background:#808080"></div><div style="left:451px;top:695px;width:1px;height:26px;background:#fff"></div><div style="left:552px;top:695px;width:1px;height:26px;background:#808080"></div><div style="left:553px;top:695px;width:1px;height:26px;background:#fff"></div><div style="left:624px;top:695px;width:1px;height:26px;background:#808080"></div><div style="left:625px;top:695px;width:1px;height:26px;background:#fff"></div><div style="left:705px;top:695px;width:1px;height:26px;background:#808080"></div><div style="left:706px;top:695px;width:1px;height:26px;background:#fff"></div><div style="left:832px;top:695px;width:1px;height:26px;background:#808080"></div><div style="left:833px;top:695px;width:1px;height:26px;background:#fff"></div><div style="left:937px;top:695px;width:1px;height:26px;background:#808080"></div><div style="left:938px;top:695px;width:1px;height:26px;background:#fff"></div><div style="left:990px;top:695px;width:1px;height:26px;background:#808080"></div><div style="left:991px;top:695px;width:1px;height:26px;background:#fff"></div><div style="left:1080px;top:695px;width:1px;height:26px;background:#808080"></div><div style="left:1081px;top:695px;width:1px;height:26px;background:#fff"></div><div style="left:1131px;top:695px;width:1px;height:26px;background:#808080"></div><div style="left:1132px;top:695px;width:1px;height:26px;background:#fff"></div><div style="left:1179px;top:695px;width:1px;height:26px;background:#808080"></div><div style="left:1180px;top:695px;width:1px;height:26px;background:#fff"></div><div style="left:1223px;top:695px;width:1px;height:26px;background:#808080"></div><div style="left:1224px;top:695px;width:1px;height:26px;background:#fff"></div><div style="left:1264px;top:695px;width:1px;height:26px;background:#808080"></div><div style="left:1265px;top:695px;width:1px;height:26px;background:#fff"></div><div style="left:13px;top:722px;width:1276px;height:1px;background:#808080"></div><div style="left:13px;top:744px;width:1276px;height:1px;background:#000"></div><div style="left:13px;top:766px;width:1276px;height:1px;background:#000"></div><div style="left:13px;top:788px;width:1276px;height:1px;background:#000"></div><div style="left:62px;top:723px;width:1px;height:87px;background:#000"></div><div style="left:294px;top:723px;width:1px;height:87px;background:#000"></div><div style="left:363px;top:723px;width:1px;height:87px;background:#000"></div><div style="left:450px;top:723px;width:1px;height:87px;background:#000"></div><div style="left:552px;top:723px;width:1px;height:87px;background:#000"></div><div style="left:624px;top:723px;width:1px;height:87px;background:#000"></div><div style="left:705px;top:723px;width:1px;height:87px;background:#000"></div><div style="left:832px;top:723px;width:1px;height:87px;background:#000"></div><div style="left:937px;top:723px;width:1px;height:87px;background:#000"></div><div style="left:990px;top:723px;width:1px;height:87px;background:#000"></div><div style="left:1080px;top:723px;width:1px;height:87px;background:#000"></div><div style="left:1131px;top:723px;width:1px;height:87px;background:#000"></div><div style="left:1179px;top:723px;width:1px;height:87px;background:#000"></div><div style="left:1223px;top:723px;width:1px;height:87px;background:#000"></div><div style="left:1264px;top:723px;width:1px;height:87px;background:#000"></div><div style="left:13px;top:723px;width:49px;height:21px;background:#0a246a"></div><div style="left:938px;top:723px;width:52px;height:21px;background:#90ee90"></div><div style="left:938px;top:745px;width:52px;height:21px;background:#ffb6c1"></div><div style="left:938px;top:767px;width:52px;height:21px;background:#90ee90"></div><div style="left:938px;top:789px;width:52px;height:21px;background:#90ee90"></div><div class="t" style="left:-63.0px;width:200px;text-align:center;top:703px;font-size:11px;line-height:11px;color:#000;font-weight:400;">Расчет</div><div class="t" style="left:78.0px;width:200px;text-align:center;top:703px;font-size:11px;line-height:11px;color:#000;font-weight:400;">Код бумаги</div><div class="t" style="left:228.5px;width:200px;text-align:center;top:696px;font-size:11px;line-height:11px;color:#000;font-weight:400;">Тип</div><div class="t" style="left:228.5px;width:200px;text-align:center;top:709px;font-size:11px;line-height:11px;color:#000;font-weight:400;">опциона</div><div class="t" style="left:306.5px;width:200px;text-align:center;top:696px;font-size:11px;line-height:11px;color:#000;font-weight:400;">Дата</div><div class="t" style="left:306.5px;width:200px;text-align:center;top:709px;font-size:11px;line-height:11px;color:#000;font-weight:400;">погашения</div><div class="t" style="left:401.0px;width:200px;text-align:center;top:696px;font-size:11px;line-height:11px;color:#000;font-weight:400;">Дней до</div><div class="t" style="left:401.0px;width:200px;text-align:center;top:709px;font-size:11px;line-height:11px;color:#000;font-weight:400;">погашения</div><div class="t" style="left:488.0px;width:200px;text-align:center;top:703px;font-size:11px;line-height:11px;color:#000;font-weight:400;">Количество</div><div class="t" style="left:564.5px;width:200px;text-align:center;top:696px;font-size:11px;line-height:11px;color:#000;font-weight:400;">Цена</div><div class="t" style="left:564.5px;width:200px;text-align:center;top:709px;font-size:11px;line-height:11px;color:#000;font-weight:400;">открытия</div><div class="t" style="left:668.5px;width:200px;text-align:center;top:696px;font-size:11px;line-height:11px;color:#000;font-weight:400;">Волатильность</div><div class="t" style="left:668.5px;width:200px;text-align:center;top:709px;font-size:11px;line-height:11px;color:#000;font-weight:400;">открытия</div><div class="t" style="left:784.5px;width:200px;text-align:center;top:696px;font-size:11px;line-height:11px;color:#000;font-weight:400;">Теоретическая</div><div class="t" style="left:784.5px;width:200px;text-align:center;top:709px;font-size:11px;line-height:11px;color:#000;font-weight:400;">цена</div><div class="t" style="left:863.5px;width:200px;text-align:center;top:703px;font-size:11px;line-height:11px;color:#000;font-weight:400;">Профит</div><div class="t" style="left:935.0px;width:200px;text-align:center;top:703px;font-size:11px;line-height:11px;color:#000;font-weight:400;">Волатильность</div><div class="t" style="left:1005.5px;width:200px;text-align:center;top:703px;font-size:11px;line-height:11px;color:#000;font-weight:400;">Дельта</div><div class="t" style="left:1055.0px;width:200px;text-align:center;top:703px;font-size:11px;line-height:11px;color:#000;font-weight:400;">Гамма</div><div class="t" style="left:1101.0px;width:200px;text-align:center;top:703px;font-size:11px;line-height:11px;color:#000;font-weight:400;">Вега</div><div class="t" style="left:1143.5px;width:200px;text-align:center;top:703px;font-size:11px;line-height:11px;color:#000;font-weight:400;">Тета</div><div class="t" style="left:1176.5px;width:200px;text-align:center;top:703px;font-size:11px;line-height:11px;color:#000;font-weight:400;"></div><svg style="position:absolute;left:1272px;top:703px" width="9" height="10" viewBox="0 0 9 10"><path d="M1 0.5 L8 9.5 M8 0.5 L1 9.5" stroke="#000" stroke-width="1.1"/></svg><div style="left:31px;top:726px;width:11px;height:11px;background:#fff;border-style:solid;border-width:1px;border-color:#808080 #fff #fff #808080;box-shadow:inset 1px 1px 0 #404040, inset -1px -1px 0 #d4d0c8"><svg width="13" height="13" viewBox="0 0 13 13" style="position:absolute;left:-1px;top:-1px"><path d="M3.3 5.8 L5.6 8.6 L10.2 3.6" stroke="#000" stroke-width="2.3" fill="none"/></svg></div><div class="t" style="left:78.0px;width:200px;text-align:center;top:729px;font-size:11px;line-height:11px;color:#000;font-weight:400;">RI90000BX0</div><div class="t" style="left:228.5px;width:200px;text-align:center;top:729px;font-size:11px;line-height:11px;color:#000;font-weight:400;">Put</div><div class="t" style="left:306.5px;width:200px;text-align:center;top:729px;font-size:11px;line-height:11px;color:#000;font-weight:400;">17.12.2020</div><div class="t" style="left:401.0px;width:200px;text-align:center;top:729px;font-size:11px;line-height:11px;color:#000;font-weight:400;">34</div><div class="t" style="left:488.0px;width:200px;text-align:center;top:729px;font-size:11px;line-height:11px;color:#000;font-weight:400;">-5</div><div class="t" style="left:564.5px;width:200px;text-align:center;top:729px;font-size:11px;line-height:11px;color:#000;font-weight:400;">1310</div><div class="t" style="left:668.5px;width:200px;text-align:center;top:729px;font-size:11px;line-height:11px;color:#000;font-weight:400;">80,74</div><div class="t" style="left:784.5px;width:200px;text-align:center;top:729px;font-size:11px;line-height:11px;color:#000;font-weight:400;">174,81</div><div class="t" style="left:863.5px;width:200px;text-align:center;top:729px;font-size:11px;line-height:11px;color:#000;font-weight:400;">5675,95</div><div class="t" style="left:935.0px;width:200px;text-align:center;top:729px;font-size:11px;line-height:11px;color:#000;font-weight:400;">52,37</div><div class="t" style="left:1005.5px;width:200px;text-align:center;top:729px;font-size:11px;line-height:11px;color:#000;font-weight:400;">0,11</div><div class="t" style="left:1055.0px;width:200px;text-align:center;top:729px;font-size:11px;line-height:11px;color:#000;font-weight:400;">-1,4E-05</div><div class="t" style="left:1101.0px;width:200px;text-align:center;top:729px;font-size:11px;line-height:11px;color:#000;font-weight:400;">-100,44</div><div class="t" style="left:1143.5px;width:200px;text-align:center;top:729px;font-size:11px;line-height:11px;color:#000;font-weight:400;">77,62</div><div style="left:1265px;top:723px;width:21px;height:18px;background:#f4f4f4;border-left:1px solid #fff;border-top:1px solid #fff;border-right:2px solid #202020;border-bottom:2px solid #202020"></div><svg style="position:absolute;left:1272px;top:729px" width="9" height="10" viewBox="0 0 9 10"><path d="M1 0.5 L8 9.5 M8 0.5 L1 9.5" stroke="#000" stroke-width="1.1"/></svg><div style="left:31px;top:748px;width:11px;height:11px;background:#f0f0f0;border-style:solid;border-width:1px;border-color:#808080 #fff #fff #808080;box-shadow:inset 1px 1px 0 #404040, inset -1px -1px 0 #d4d0c8"><svg width="13" height="13" viewBox="0 0 13 13" style="position:absolute;left:-1px;top:-1px"><path d="M3.3 5.8 L5.6 8.6 L10.2 3.6" stroke="#000" stroke-width="2.3" fill="none"/></svg></div><div class="t" style="left:78.0px;width:200px;text-align:center;top:751px;font-size:11px;line-height:11px;color:#000;font-weight:400;">RI120000BL0</div><div class="t" style="left:228.5px;width:200px;text-align:center;top:751px;font-size:11px;line-height:11px;color:#000;font-weight:400;">Call</div><div class="t" style="left:306.5px;width:200px;text-align:center;top:751px;font-size:11px;line-height:11px;color:#000;font-weight:400;">17.12.2020</div><div class="t" style="left:401.0px;width:200px;text-align:center;top:751px;font-size:11px;line-height:11px;color:#000;font-weight:400;">34</div><div class="t" style="left:488.0px;width:200px;text-align:center;top:751px;font-size:11px;line-height:11px;color:#000;font-weight:400;">-1</div><div class="t" style="left:564.5px;width:200px;text-align:center;top:751px;font-size:11px;line-height:11px;color:#000;font-weight:400;">1160</div><div class="t" style="left:668.5px;width:200px;text-align:center;top:751px;font-size:11px;line-height:11px;color:#000;font-weight:400;">0</div><div class="t" style="left:784.5px;width:200px;text-align:center;top:751px;font-size:11px;line-height:11px;color:#000;font-weight:400;">5406,06</div><div class="t" style="left:863.5px;width:200px;text-align:center;top:751px;font-size:11px;line-height:11px;color:#000;font-weight:400;">-4246,06</div><div class="t" style="left:935.0px;width:200px;text-align:center;top:751px;font-size:11px;line-height:11px;color:#000;font-weight:400;">28,31</div><div class="t" style="left:1005.5px;width:200px;text-align:center;top:751px;font-size:11px;line-height:11px;color:#000;font-weight:400;">-0,6</div><div class="t" style="left:1055.0px;width:200px;text-align:center;top:751px;font-size:11px;line-height:11px;color:#000;font-weight:400;">-3,7E-05</div><div class="t" style="left:1101.0px;width:200px;text-align:center;top:751px;font-size:11px;line-height:11px;color:#000;font-weight:400;">-143,64</div><div class="t" style="left:1143.5px;width:200px;text-align:center;top:751px;font-size:11px;line-height:11px;color:#000;font-weight:400;">60,01</div><div style="left:1265px;top:745px;width:21px;height:18px;background:#f4f4f4;border-left:1px solid #fff;border-top:1px solid #fff;border-right:2px solid #202020;border-bottom:2px solid #202020"></div><svg style="position:absolute;left:1272px;top:751px" width="9" height="10" viewBox="0 0 9 10"><path d="M1 0.5 L8 9.5 M8 0.5 L1 9.5" stroke="#000" stroke-width="1.1"/></svg><div style="left:31px;top:770px;width:11px;height:11px;background:#f0f0f0;border-style:solid;border-width:1px;border-color:#808080 #fff #fff #808080;box-shadow:inset 1px 1px 0 #404040, inset -1px -1px 0 #d4d0c8"><svg width="13" height="13" viewBox="0 0 13 13" style="position:absolute;left:-1px;top:-1px"><path d="M3.3 5.8 L5.6 8.6 L10.2 3.6" stroke="#000" stroke-width="2.3" fill="none"/></svg></div><div class="t" style="left:78.0px;width:200px;text-align:center;top:773px;font-size:11px;line-height:11px;color:#000;font-weight:400;">FixedProfit</div><div class="t" style="left:863.5px;width:200px;text-align:center;top:773px;font-size:11px;line-height:11px;color:#000;font-weight:400;">8860</div><div style="left:1265px;top:767px;width:21px;height:18px;background:#f4f4f4;border-left:1px solid #fff;border-top:1px solid #fff;border-right:2px solid #202020;border-bottom:2px solid #202020"></div><svg style="position:absolute;left:1272px;top:773px" width="9" height="10" viewBox="0 0 9 10"><path d="M1 0.5 L8 9.5 M8 0.5 L1 9.5" stroke="#000" stroke-width="1.1"/></svg><div style="left:31px;top:792px;width:11px;height:11px;background:#f0f0f0;border-style:solid;border-width:1px;border-color:#808080 #fff #fff #808080;box-shadow:inset 1px 1px 0 #404040, inset -1px -1px 0 #d4d0c8"><svg width="13" height="13" viewBox="0 0 13 13" style="position:absolute;left:-1px;top:-1px"><path d="M3.3 5.8 L5.6 8.6 L10.2 3.6" stroke="#000" stroke-width="2.3" fill="none"/></svg></div><div class="t" style="left:78.0px;width:200px;text-align:center;top:795px;font-size:11px;line-height:11px;color:#000;font-weight:400;">Итого:</div><div class="t" style="left:863.5px;width:200px;text-align:center;top:795px;font-size:11px;line-height:11px;color:#000;font-weight:400;">10289,89</div><div class="t" style="left:1005.5px;width:200px;text-align:center;top:795px;font-size:11px;line-height:11px;color:#000;font-weight:400;">-0,49</div><div class="t" style="left:1055.0px;width:200px;text-align:center;top:795px;font-size:11px;line-height:11px;color:#000;font-weight:400;">-5,1E-05</div><div class="t" style="left:1101.0px;width:200px;text-align:center;top:795px;font-size:11px;line-height:11px;color:#000;font-weight:400;">-244,08</div><div class="t" style="left:1143.5px;width:200px;text-align:center;top:795px;font-size:11px;line-height:11px;color:#000;font-weight:400;">137,63</div><div style="left:1265px;top:789px;width:21px;height:18px;background:#f4f4f4;border-left:1px solid #fff;border-top:1px solid #fff;border-right:2px solid #202020;border-bottom:2px solid #202020"></div><svg style="position:absolute;left:1272px;top:795px" width="9" height="10" viewBox="0 0 9 10"><path d="M1 0.5 L8 9.5 M8 0.5 L1 9.5" stroke="#000" stroke-width="1.1"/></svg><div style="left:5px;top:815px;width:1291px;height:1px;background:#fff"></div><div style="left:5px;top:816px;width:1291px;height:24px;background:linear-gradient(#d4d4d4 85%,#d4d0c8)"></div><div class="t" style="left:9px;top:822px;font-size:11px;line-height:11px;color:#000;font-weight:400;letter-spacing:-0.3px">Время обновления 20 мс</div><div class="t" style="left:137px;top:822px;font-size:11px;line-height:11px;color:#000;font-weight:400;letter-spacing:0.06px">Profit=10289,89 Delta(Δ)=-0,49 Gamma(Γ)=-5,1E-05 Vega=-244,08 Theta(Θ)=137,63</div><div style="left:1197px;top:805px;width:100px;height:32px;border:1px solid #000;background:#ffffe1"></div><div class="t" style="left:1203px;top:810px;font-size:11px;line-height:11px;color:#000;font-weight:400;">13 ноября 2020 г.</div><div class="t" style="left:1203px;top:823px;font-size:11px;line-height:11px;color:#000;font-weight:400;">пятница</div><div style="left:0px;top:840px;width:1299px;height:43px;background:#d4d0c8;border-top:1px solid #fff"></div><div class="t" style="left:1084px;top:854px;font-size:11px;line-height:11px;color:#000;font-weight:400;">RU</div><div style="left:1103px;top:848px;width:1px;height:26px;background:#808080"></div><div style="left:1104px;top:848px;width:1px;height:26px;background:#fff"></div><div style="left:1107px;top:843px;width:190px;height:38px;border-style:solid;border-width:1px;border-color:#808080 #fff #fff #808080"></div><div class="t" style="left:1204.0px;width:80px;text-align:center;top:849px;font-size:11px;line-height:11px;color:#000;font-weight:400;">19:32</div><div class="t" style="left:1203.5px;width:80px;text-align:center;top:865px;font-size:11px;line-height:11px;color:#000;font-weight:400;">13.11.2020</div><svg style="position:absolute;left:1113px;top:853px" width="18" height="18" viewBox="0 0 18 18"><rect x="4.5" y="1.5" width="10" height="15" fill="#90c8f0" stroke="#5a98c8"/><rect x="6" y="3.5" width="2" height="2" fill="#d86040"/><rect x="9" y="3" width="2" height="2" fill="#60a850"/><rect x="6" y="6.5" width="2" height="2" fill="#2a70b0"/><ellipse cx="9" cy="8" rx="8" ry="3.6" fill="none" stroke="#f0a840" stroke-width="1.4" transform="rotate(-25 9 8)"/></svg><svg style="position:absolute;left:1137px;top:853px" width="17" height="18" viewBox="0 0 17 18"><path d="M1.5 5.5 L4.5 5.5 L8.5 1.5 L8.5 16.5 L4.5 12.5 L1.5 12.5 Z" fill="#fff" stroke="#404040" stroke-width="1.1"/><path d="M10.5 5.5 Q12.5 9 10.5 12.5 M12.5 3 Q16 9 12.5 15" stroke="#505050" fill="none" stroke-width="1.1"/></svg><svg style="position:absolute;left:1161px;top:853px" width="18" height="18" viewBox="0 0 18 18"><rect x="5.5" y="2.5" width="11" height="10" fill="#909090" stroke="#404040"/><rect x="7" y="4" width="8" height="7" fill="#b8b8b8"/><path d="M6 13.5 L16 13.5 L16 15.5 L6 15.5 Z" fill="#fff" stroke="#404040"/><path d="M1.5 1 L1.5 6 M4.5 1 L4.5 6 M1 6.5 L5 6.5 M3 7 L3 17" stroke="#303030" stroke-width="1.2" fill="none"/></svg><svg style="position:absolute;left:1185px;top:853px" width="18" height="18" viewBox="0 0 18 18"><rect x="1.5" y="1.5" width="2" height="15.5" fill="#fff" stroke="#404040"/><path d="M3.5 2.5 Q7 1.5 9 3 Q11 4.5 16.5 4 Q15 7 14 9.5 Q11 11.5 8 10 Q6 9 3.5 10 Z" fill="#f4f4f4" stroke="#505050"/></svg><div style="left:1280px;top:856px;width:14px;height:12px;background:linear-gradient(#1a58b8,#3a8ae0 60%,#1a4890);border-bottom:1px solid #102848"></div>
</body></html>
